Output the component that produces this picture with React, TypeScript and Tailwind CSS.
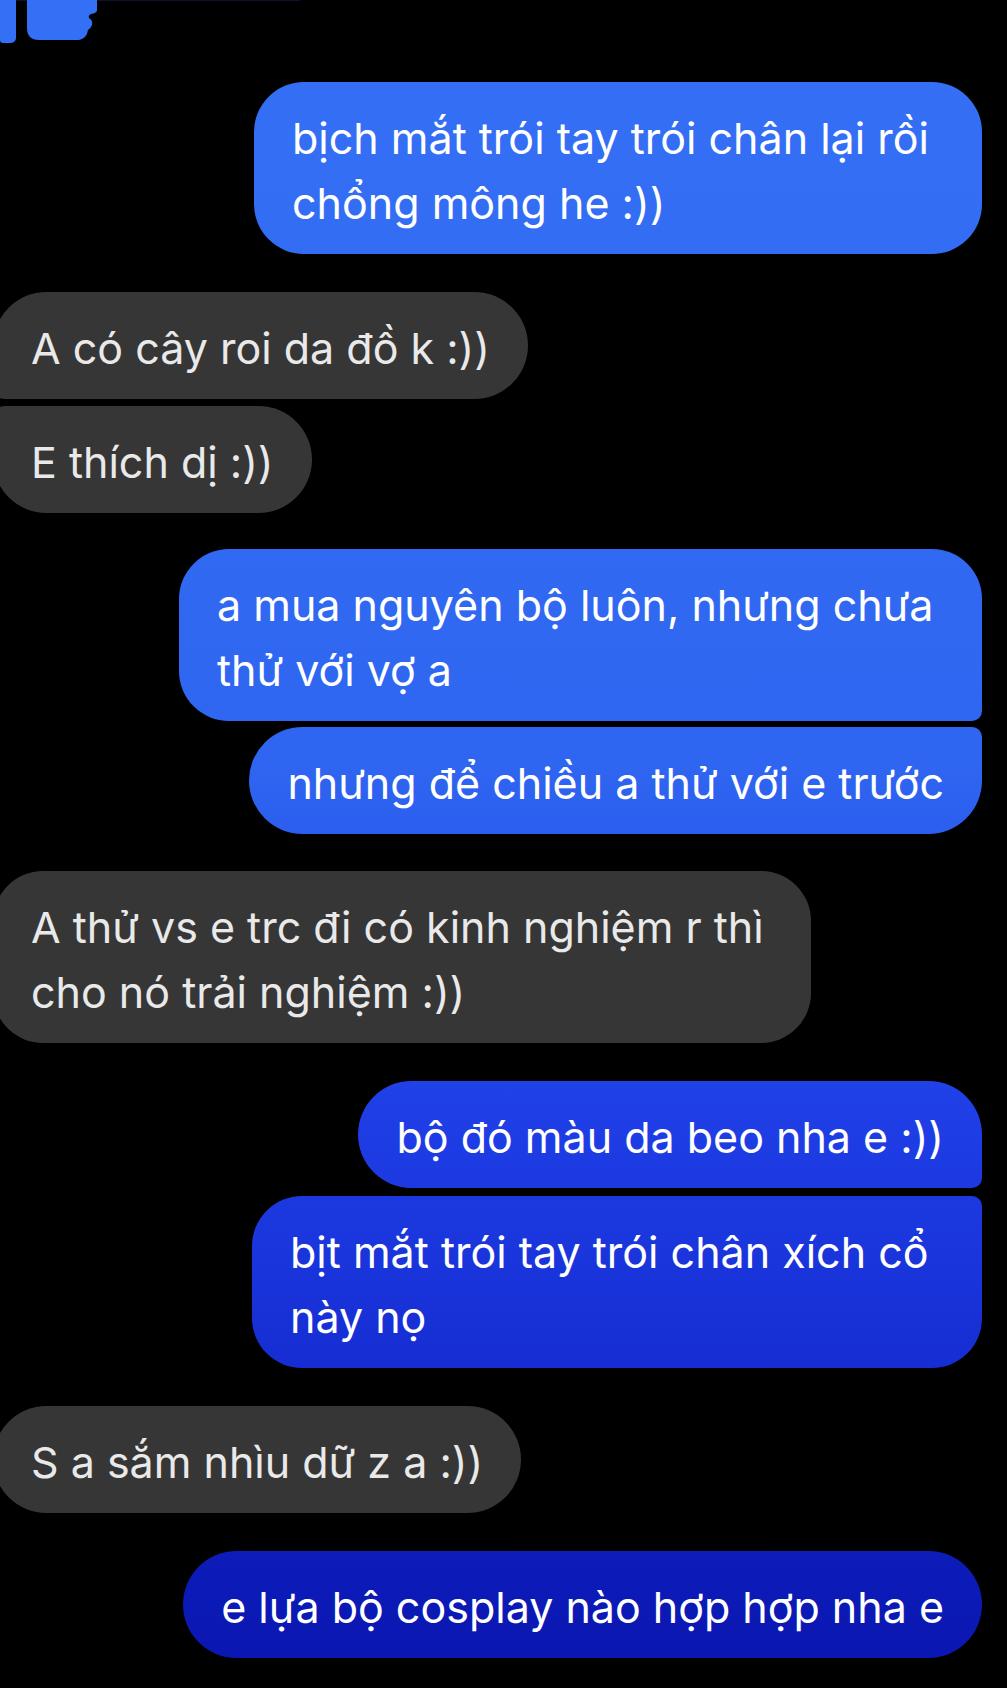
import React from "react";

const blue =
  "bg-fixed bg-[linear-gradient(to_bottom,#3470f5_0%,#2f66f1_45%,#1f3ee6_66%,#1730d6_79%,#0c1bb8_93%,#0a15b0_100%)] text-white";
const gray = "bg-[#363636] text-[#e9e9e9]";

type Msg = {
  me: boolean;
  lines: string[];
  w?: string;
  r: string;
  gap: string;
};

const msgs: Msg[] = [
  {
    me: true,
    lines: ["bịch mắt trói tay trói chân lại rồi", "chổng mông he :))"],
    w: "w-[728px]",
    r: "rounded-[50px]",
    gap: "mt-[39px]",
  },
  {
    me: false,
    lines: ["A có cây roi da đồ k :))"],
    r: "rounded-[54px] rounded-bl-[12px]",
    gap: "mt-[38px]",
  },
  {
    me: false,
    lines: ["E thích dị :))"],
    r: "rounded-[54px] rounded-tl-[12px]",
    gap: "mt-[7px]",
  },
  {
    me: true,
    lines: ["a mua nguyên bộ luôn, nhưng chưa", "thử với vợ a"],
    w: "w-[803px]",
    r: "rounded-[50px] rounded-br-[10px]",
    gap: "mt-[36px]",
  },
  {
    me: true,
    lines: ["nhưng để chiều a thử với e trước"],
    r: "rounded-[54px] rounded-tr-[10px]",
    gap: "mt-[6px]",
  },
  {
    me: false,
    lines: ["A thử vs e trc đi có kinh nghiệm r thì", "cho nó trải nghiệm :))"],
    w: "w-[818px]",
    r: "rounded-[50px]",
    gap: "mt-[37px]",
  },
  {
    me: true,
    lines: ["bộ đó màu da beo nha e :))"],
    r: "rounded-[54px] rounded-br-[10px]",
    gap: "mt-[38px]",
  },
  {
    me: true,
    lines: ["bịt mắt trói tay trói chân xích cổ", "này nọ"],
    w: "w-[730px]",
    r: "rounded-[50px] rounded-tr-[10px]",
    gap: "mt-[8px]",
  },
  {
    me: false,
    lines: ["S a sắm nhìu dữ z a :))"],
    r: "rounded-[54px]",
    gap: "mt-[38px]",
  },
  {
    me: true,
    lines: ["e lựa bộ cosplay nào hợp hợp nha e"],
    r: "rounded-[54px]",
    gap: "mt-[38px]",
  },
];

const Bubble = ({ m }: { m: Msg }) => (
  <div className={`flex ${m.me ? "justify-end pr-[25px]" : "justify-start"} ${m.gap}`}>
    <div
      className={`${m.me ? blue : gray} ${m.r} ${m.w ?? "w-fit pr-[38px]"} ${
        m.me ? "" : "-ml-[7px]"
      } pl-[38px] pt-[24px] pb-[18px] text-[43px] leading-[65px] whitespace-nowrap`}
    >
      {m.lines.map((l, i) => (
        <div key={i}>{l}</div>
      ))}
    </div>
  </div>
);

export default function App() {
  return (
    <div
      className="min-h-[1688px] w-full bg-black overflow-hidden"
      style={{ fontFamily: "Inter, 'Noto Sans', sans-serif" }}
    >
      <div className="h-px w-[300px] bg-[#0b1330]" />
      <div className="flex items-start gap-[11px] -mt-px">
        <div className="h-[43px] w-[16px] rounded-br-[5px] rounded-bl-[3px] bg-[#3470f5]" />
        <svg width="72" height="41" viewBox="0 0 72 41">
          <path
            d="M0 0 H70 V10 Q70 13 64 14 Q61 15 62 18 Q66 20 65 25 Q64 28 61 30 Q60 38 52 40 H12 Q0 40 0 28 Z"
            fill="#3470f5"
          />
        </svg>
      </div>
      {msgs.map((m, i) => (
        <Bubble key={i} m={m} />
      ))}
    </div>
  );
}
